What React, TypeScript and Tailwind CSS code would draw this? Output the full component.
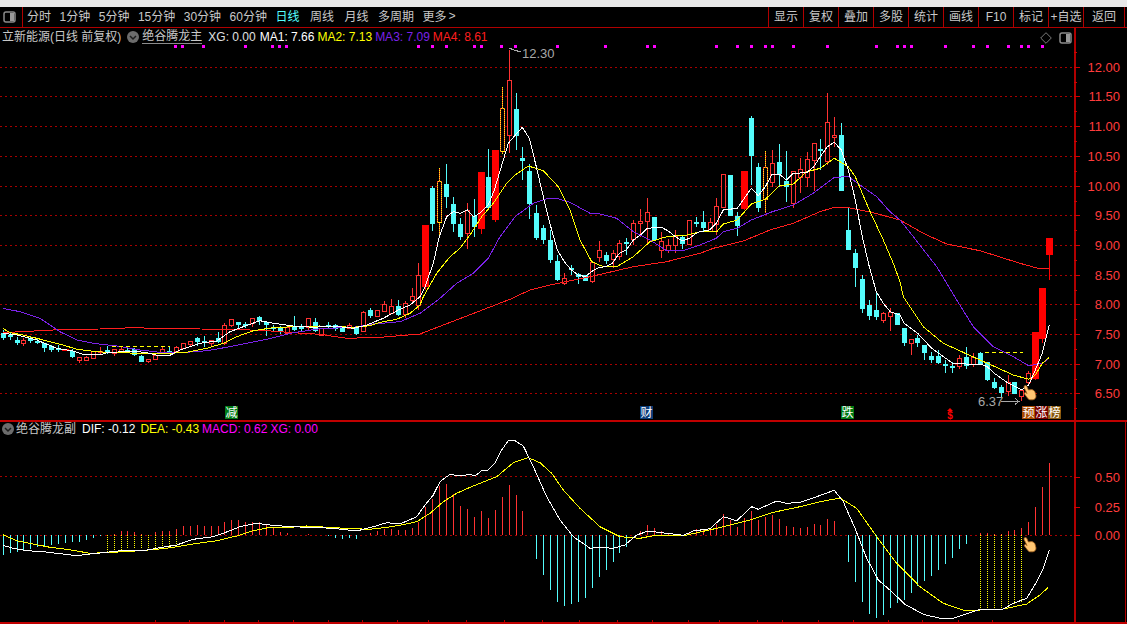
import React from 'react';

type Candle = [number, number, number, number, string];

// hi, body top, body bottom, lo, kind (r hollow red, R solid red, c cyan, y dotted yellow)
const candles: Candle[] = [
  [330,333,338,340,'c'],[333,335,337,340,'c'],[337,340,343,345,'c'],[338,340,343,346,'r'],[336,338,341,343,'c'],
  [338,341,342,344,'c'],[343,343,348,352,'c'],[345,346,350,352,'c'],[345,348,349,352,'c'],[349,349,351,351,'R'],
  [349,351,357,358,'c'],[357,357,360,363,'r'],[356,357,360,360,'r'],[351,351,358,358,'r'],[347,351,352,355,'r'],
  [346,350,353,354,'c'],[349,349,353,356,'r'],[347,349,351,352,'r'],[348,350,351,353,'c'],[348,349,355,356,'c'],
  [355,356,362,362,'c'],[359,359,361,363,'r'],[353,355,359,359,'r'],[347,349,353,354,'r'],[347,351,352,353,'c'],
  [346,347,351,353,'r'],[343,343,348,348,'r'],[341,341,344,346,'r'],[337,338,342,346,'c'],[336,341,343,347,'c'],
  [340,340,343,346,'r'],[332,338,342,343,'c'],[323,325,343,345,'r'],[319,319,325,327,'r'],[322,322,325,329,'c'],
  [322,324,326,328,'c'],[318,318,323,327,'r'],[316,317,321,325,'c'],[321,322,325,336,'c'],[325,327,329,331,'c'],
  [326,328,331,334,'c'],[326,327,333,335,'r'],[316,327,330,331,'c'],[324,327,329,332,'c'],[318,318,327,330,'r'],
  [318,322,331,332,'c'],[328,328,335,335,'r'],[322,325,327,329,'c'],[324,325,329,331,'c'],[328,328,332,332,'c'],
  [323,325,328,329,'r'],[326,328,334,335,'c'],[311,312,331,331,'r'],[308,310,316,318,'c'],[310,310,316,316,'r'],
  [301,304,311,312,'r'],[299,306,313,313,'r'],[300,306,315,316,'c'],[301,303,314,318,'r'],[288,296,300,303,'r'],
  [263,275,305,310,'r'],[225,225,287,290,'R'],[186,188,224,231,'c'],[168,181,222,238,'y'],[164,184,197,208,'c'],
  [197,204,224,232,'c'],[218,224,237,240,'c'],[203,210,233,249,'r'],[199,216,227,237,'c'],[172,172,229,234,'R'],
  [149,177,208,208,'c'],[150,150,220,222,'R'],[87,108,151,154,'y'],[50,80,135,153,'r'],[93,109,136,150,'c'],
  [147,158,161,180,'c'],[164,171,204,219,'c'],[205,213,238,240,'c'],[225,228,240,244,'c'],[230,240,260,263,'c'],
  [255,261,280,281,'c'],[273,278,283,285,'r'],[265,268,270,275,'c'],[273,274,277,284,'c'],[275,275,281,281,'c'],
  [262,262,281,283,'r'],[241,250,257,262,'r'],[252,255,261,264,'c'],[250,253,259,268,'r'],[240,243,256,260,'r'],
  [238,242,244,255,'c'],[220,223,239,245,'r'],[209,221,223,237,'r'],[198,212,221,244,'r'],[217,217,240,240,'c'],
  [232,241,250,258,'r'],[239,245,250,253,'r'],[230,236,245,253,'r'],[235,237,244,249,'c'],[220,220,244,244,'r'],
  [217,222,223,227,'c'],[211,222,228,232,'c'],[218,222,231,231,'r'],[198,206,224,235,'r'],[174,174,207,207,'r'],
  [175,175,216,216,'c'],[212,216,226,236,'c'],[171,171,209,210,'R'],[116,118,156,185,'c'],[163,167,208,212,'c'],
  [151,167,199,213,'y'],[150,163,182,187,'r'],[144,162,174,187,'c'],[151,181,187,202,'c'],[171,171,203,208,'r'],
  [158,169,177,193,'r'],[152,159,177,187,'r'],[143,143,160,191,'r'],[139,149,151,170,'c'],[93,122,161,165,'r'],
  [117,135,137,147,'r'],[123,135,191,191,'c'],[208,230,250,250,'c'],[249,253,268,287,'c'],[275,279,309,313,'c'],
  [300,305,316,320,'c'],[293,310,317,320,'c'],[312,313,320,323,'r'],[308,312,316,331,'r'],[313,313,325,325,'c'],
  [328,328,343,346,'c'],[339,339,343,355,'r'],[335,338,343,347,'c'],[345,345,353,360,'c'],[352,356,360,363,'c'],
  [350,356,363,364,'c'],[360,364,365,373,'c'],[362,366,367,373,'c'],[355,358,366,369,'r'],[347,357,366,369,'c'],
  [353,357,364,367,'r'],[352,353,364,365,'c'],[362,362,380,381,'c'],[378,382,388,389,'c'],[385,387,393,398,'c'],
  [375,382,391,396,'r'],[382,382,394,394,'c'],[390,390,396,401,'r'],[371,373,382,384,'r'],[332,332,379,380,'R'],
  [288,288,339,343,'R'],[238,238,255,280,'R'],
];

// MACD bar height in px from the zero line, + up / - down
const macd = [
  -20,-18,-17,-15,-14,-12,-11,-10,-9,-8,-7,-7,-5,-3,-1,0,1,4,4,3,1,0,3,4,4,6,9,9,10,9,9,9,13,15,15,13,13,13,10,8,3,2,0,0,1,0,0,-1,-3,-4,
  -3,-4,0,2,4,6,6,5,5,7,13,28,36,49,51,41,29,26,18,24,17,25,38,50,40,24,0,-24,-40,-55,-67,-71,-69,-67,-63,-53,-42,-35,-27,-18,-12,0,4,10,7,4,1,0,0,3,
  6,5,6,11,21,15,8,17,24,15,18,20,16,9,8,7,8,11,10,16,14,0,-27,-47,-67,-79,-83,-80,-73,-68,-65,-58,-51,-46,-41,-35,-29,-23,-14,-9,0,2,2,1,1,4,5,7,13,28,48,72,
];

const dotted: [number, number][] = [
  [15,552],[16,551],[17,550],[18,549],[19,549],[20,549],[21,550],[22,549],[23,548],[24,546],[25,545],
  [141,608],[142,608],[143,608],[144,608],[145,605],[146,604],[147,602],
];

const magenta = [174,181,202,244,271,278,285,417,431,445,473,480,500,514,556,604,646,653,715,736,750,764,771,792,826,875,896,903,910,944,972,986,1007,1020,1027,1041];

const cx = (i: number) => Math.round(2.7 + 6.93 * i);

// scale a flat list of 3x crop coordinates back to page pixels
const seg = (ox: number, oy: number, pts: number[]) => {
  const out: [number, number][] = [];
  for (let i = 0; i < pts.length; i += 2) out.push([ox + pts[i] / 3, oy + pts[i + 1] / 3]);
  return out;
};

const join = (...segs: [number, number][][]) => {
  const out: [number, number][] = [];
  segs.forEach((s) => s.forEach((p) => {
    if (!out.length || p[0] > out[out.length - 1][0]) out.push(p);
  }));
  return out.map((p) => p[0].toFixed(1) + ',' + p[1].toFixed(1)).join(' ');
};

const ma1 = join(
  seg(0,290,[8,130,50,135,110,150,170,175,215,182,250,193,300,195,320,188,400,183,440,188,480,198,510,196,540,180,600,160,650,153,690,125,730,110,780,92,820,100,880,108,940,112,1000,108,1060,115,1100,105,1150,85,1195,60,1230,45,1260,20]),
  seg(400,40,[55,780,75,740,100,670,118,590,140,530,160,515,180,520,202,510,222,530,243,517,265,495,283,450,304,380,325,310,346,285,367,262,388,295,409,380,430,470,451,555,472,630,493,665,514,690,535,705,556,710,574,695,595,683,616,680,637,670,658,640,679,630,700,600,721,585,742,565,763,563,784,562,805,573,826,590,847,603,868,595,889,580,900,575]),
  seg(680,80,[0,480,20,475,49,460,88,450,109,430,130,390,172,385,193,355,214,325,235,347,256,320,277,282,298,282,319,300,340,280,380,278,401,260,421,230,442,200,463,187,484,210,505,270,526,360,547,470,568,560,589,635,610,670,631,695,660,705]),
  seg(880,220,[0,240,31,285,73,310,113,340,155,385,197,415,218,430,259,432,301,432,322,440,343,460,385,490,425,510,446,495,466,450,487,400,508,316]),
);

const ma2 = join(
  seg(0,290,[8,115,30,128,70,135,110,145,150,155,190,165,230,178,290,185,340,188,440,190,510,190,560,187,620,175,670,160,710,140,760,122,820,113,880,110,960,108,1060,112,1110,107,1140,97,1190,88,1230,70,1260,45]),
  seg(400,40,[70,770,110,700,150,650,180,625,210,585,245,530,280,490,320,430,345,405,385,378,430,392,475,440,510,510,540,600,575,665,610,680,650,680,700,650,750,605,800,590,860,585,900,575]),
  seg(680,80,[0,465,30,458,110,455,130,432,172,420,214,372,256,358,298,318,340,312,380,275,421,265,463,235,505,260,526,290,568,390,610,480,640,550,660,605]),
  seg(880,220,[0,30,30,130,70,230,130,320,190,370,300,420,345,440,400,465,446,478,466,465,487,430,508,412]),
);

const ma3 = join(
  seg(0,290,[8,55,60,65,120,85,180,125,230,150,280,160,350,168,420,180,480,187,560,187,620,182,680,172,740,160,800,148,880,128,960,116,1060,112,1120,102,1200,95,1260,70]),
  seg(400,40,[120,775,170,730,220,700,265,655,300,590,345,530,400,490,440,476,470,475,510,487,570,520,600,522,650,535,700,575,750,600,800,632,850,632,900,615]),
  seg(680,80,[0,515,30,505,109,475,130,455,172,445,214,420,277,395,340,375,400,340,463,292,505,290,540,315,590,350,630,395,660,420]),
  seg(880,220,[60,0,100,50,170,140,230,240,280,320,340,380,400,410,446,437,487,430,508,415]),
);

const ma4 = join(
  seg(0,290,[8,128,60,125,120,122,200,118,300,117,400,113,500,116,600,117,700,118,800,122,880,128,960,133,1040,145,1140,142,1260,132]),
  seg(400,40,[330,778,390,750,450,735,580,708,700,680,800,665,900,640]),
  seg(680,80,[0,535,100,505,190,483,270,450,340,430,420,395,463,382,505,383,580,398,660,420]),
  seg(880,220,[60,0,130,40,200,72,300,92,420,130,470,144,508,146]),
);

const dif = join(
  seg(0,420,[8,376,40,385,80,392,130,395,170,400,230,407,270,402,320,397,380,390,430,392,480,383,530,375,580,358,640,350,670,340,720,320,770,310,810,315,870,320,930,322,1000,325,1070,333,1120,320,1160,308,1200,312]),
  seg(400,430,[0,277,50,260,75,225,100,195,120,155,150,133,180,138,210,133,225,138,245,122,262,123,285,100,305,60,325,32,345,32,370,48,400,110,440,200,480,270,520,320,570,355,600,352,640,355,675,345,710,315,745,303,800,310,850,316,880,303,930,296,970,260,1010,272,1055,230,1075,238,1130,213,1160,220,1200,217]),
  seg(800,430,[0,217,50,200,103,181,130,215,165,295,200,385,235,450,275,485,315,523,370,553,420,565,460,565,520,545,541,537,610,537,640,520,680,505,710,455,730,415,748,360]),
);

const dea = join(
  seg(0,420,[8,344,50,362,100,372,150,382,200,388,270,400,340,397,420,392,500,385,580,372,650,362,710,348,760,332,810,322,870,322,920,318,1000,323,1060,326,1110,328,1160,322,1200,316]),
  seg(400,430,[0,284,50,275,90,250,130,215,170,190,210,172,290,140,340,98,385,83,420,98,455,130,490,180,540,235,600,290,660,320,720,325,770,315,860,315,950,295,1050,270,1120,247,1200,230]),
  seg(800,430,[0,229,60,215,120,204,170,235,230,320,290,400,360,470,430,520,490,540,540,540,610,537,680,522,720,495,745,472]),
);

const priceLabels = ['12.00','11.50','11.00','10.50','10.00','9.50','9.00','8.50','8.00','7.50','7.00','6.50'];
const priceY = (i: number) => Math.round(66.7 + 29.7 * i);

const toolsLeft = [
  { t: '分时', c: '' },
  { t: '1分钟', c: '' },
  { t: '5分钟', c: '' },
  { t: '15分钟', c: '' },
  { t: '30分钟', c: '' },
  { t: '60分钟', c: '' },
  { t: '日线', c: 'text-[#55ffff]' },
  { t: '周线', c: 'ml-[2px]' },
  { t: '月线', c: 'ml-[2px]' },
  { t: '多周期', c: 'ml-[1px]' },
];
const toolsRight = ['显示','复权','叠加','多股','统计','画线','F10','标记','+自选'];
const axisTicks = [155,189,224,258,293,328,362,397,428,466,504,542,579,617,652,688,719,757,782,818,853,888,922,958,992];

const PanelIcon = () => (
  <svg width="13" height="12" viewBox="0 0 13 12">
    <rect x="1" y="1" width="11" height="10" rx="2" fill="none" stroke="#8a8a8a" strokeWidth="1.5" />
    <rect x="7" y="2" width="4" height="8" fill="#9a9a9a" />
  </svg>
);

const ChevronDot = () => (
  <svg width="12" height="12" viewBox="0 0 12 12">
    <circle cx="6" cy="6" r="6" fill="#6c6c6c" />
    <path d="M3 5l3 3 3-3" fill="none" stroke="#1c1c1c" strokeWidth="1.5" />
  </svg>
);

const Hand = ({ className }: { className: string }) => (
  <svg className={className} width="14" height="16" viewBox="0 0 14 16">
    <path
      d="M1.6.8c1-.6 2 0 2.4 1l1.4 3.2 3-.4c1.8.2 3.6 1.4 3.8 3.2l.8 3.2c0 2.200-1.500 3.800-3.500 3.800H7.500c-1.300 0-2-.6-2.800-1.600L1.500 9c-.6-1 .6-2 1.600-1.200l1 .8L1.200 2.800c-.3-.9-.1-1.600.4-2z"
      fill="#ffc672"
      stroke="#a8641e"
      strokeWidth="0.8"
    />
  </svg>
);

const Tag = ({ text, className }: { text: string; className: string }) => (
  <span className={'w-[13px] h-[13px] flex items-center justify-center text-white text-xs leading-none ' + className}>{text}</span>
);

const CandleMark = ({ c, i }: { c: Candle; i: number }) => {
  const x = cx(i);
  const [hi, top, bot, lo, kind] = c;
  if (kind === 'c') {
    return (
      <g fill="#54fcfc">
        <rect x={x} y={hi} width="1" height={lo - hi} />
        <rect x={x - 2} y={top} width="5" height={Math.max(bot - top, 2)} />
      </g>
    );
  }
  if (kind === 'R') {
    return (
      <g fill="#ff0000">
        <rect x={x} y={hi} width="1" height={lo - hi} />
        <rect x={x - 3} y={top} width="7" height={bot - top} />
      </g>
    );
  }
  const stroke = '#ff3232';
  return (
    <g>
      <rect x={x} y={hi} width="1" height={top - hi} fill={stroke} />
      <rect x={x} y={bot} width="1" height={lo - bot} fill={stroke} />
      <rect x={x - 1.5} y={top + 0.5} width="4" height={bot - top} fill="#000" stroke={stroke} />
      {kind === 'y' && (
        <g fill="none" stroke="#ffff00" strokeDasharray="1 1">
          <rect x={x - 1.5} y={top + 0.5} width="4" height={bot - top} />
          <path d={`M${x + 0.5} ${hi}V${top}M${x + 0.5} ${bot}V${lo}`} />
        </g>
      )}
    </g>
  );
};

export default function App() {
  return (
    <div className="w-[1127px] h-[624px] bg-black flex flex-col overflow-hidden font-['Liberation_Sans','Noto_Sans_CJK_SC',sans-serif] text-xs text-[#c8c8c8]">
      <div className="h-[7px] bg-[#e8e8e8]" />

      {/* toolbar */}
      <div className="h-[21px] flex items-center border-b border-[#b00000]">
        <div className="w-[23px] h-full flex items-center pl-[3px] border-r border-[#b00000]">
          <PanelIcon />
        </div>
        <div className="flex items-center gap-[8.5px] pl-1">
          {toolsLeft.map((x) => (
            <span key={x.t} className={x.c}>{x.t}</span>
          ))}
          <span className="flex items-center">更多<span className="ml-[2px] font-mono">&gt;</span></span>
        </div>
        <div className="ml-auto flex h-full items-stretch mr-[2px]">
          {toolsRight.map((t) => (
            <span key={t} className="w-[35px] flex items-center justify-center border-l border-[#b00000] whitespace-nowrap">{t}</span>
          ))}
          <span className="w-[42px] flex items-center justify-center border-x border-[#b00000]">返回</span>
        </div>
      </div>

      {/* price panel */}
      <div className="flex h-[392px]">
        <div className="relative w-[1074px] h-full">
          <svg width="1074" height="392" viewBox="0 28 1074 392" className="block" shapeRendering="crispEdges">
            {priceLabels.map((p, i) => (
              <line key={p} x1="0" x2="1074" y1={priceY(i) + 0.5} y2={priceY(i) + 0.5} stroke="#a80000" strokeDasharray="2 3" />
            ))}
            {magenta.map((x) => (
              <rect key={x} x={x} y="45" width="3" height="3" fill="#ff00ff" />
            ))}
            {candles.map((c, i) => (
              <CandleMark key={i} c={c} i={i} />
            ))}
            <polyline points={ma4} fill="none" stroke="#ff1e1e" />
            <polyline points={ma3} fill="none" stroke="#7b22e8" />
            <polyline points={ma2} fill="none" stroke="#ffff00" />
            <polyline points={ma1} fill="none" stroke="#ffffff" />
            <path d="M112 346.500H170M985 352.500H1023" stroke="#ffff00" strokeDasharray="4 3" />
            <path d="M509 48L514 50L521 52" fill="none" stroke="#a8a8a8" />
            <path d="M1001 401.500H1019M1015 398.500L1019 401.500L1015 404.500" fill="none" stroke="#a8a8a8" />
          </svg>

          {/* readouts over the chart */}
          <div className="absolute left-[2px] top-0 h-[17px] flex items-center whitespace-nowrap">
            <span>立新能源(日线 前复权)</span>
            <span className="ml-[6px]"><ChevronDot /></span>
            <span className="ml-[3px] border-b border-[#8c8c8c] leading-[14px]">绝谷腾龙主</span>
            <span className="ml-[6px] text-[#e0e0e0]">XG: 0.00</span>
            <span className="ml-[4px] text-white">MA1: 7.66</span>
            <span className="ml-[3px] text-[#ffff00]">MA2: 7.13</span>
            <span className="ml-[3px] text-[#7b22e8]">MA3: 7.09</span>
            <span className="ml-[3px] text-[#ff1e1e]">MA4: 8.61</span>
          </div>
          <div className="absolute right-[2px] top-[4px] flex items-center gap-[7px]">
            <svg width="12" height="12" viewBox="0 0 12 12">
              <path d="M6 .7L11.300 6 6 11.300.7 6z" fill="none" stroke="#7a7a7a" />
            </svg>
            <PanelIcon />
          </div>
          <span className="absolute left-[522px] top-[19px] text-[13px] leading-[14px] text-[#a8a8a8]">12.30</span>
          <span className="absolute left-[978px] top-[367px] text-[13px] leading-[14px] text-[#a8a8a8]">6.37</span>
          <Tag text="减" className="absolute left-[225px] top-[378px] bg-[#007a14]" />
          <Tag text="财" className="absolute left-[640px] top-[378px] bg-[#0c3c78]" />
          <Tag text="跌" className="absolute left-[841px] top-[378px] bg-[#007a14]" />
          <span className="absolute left-[947px] top-[380px] flex flex-col items-center text-[#ff0000] font-bold leading-none">
            <span className="w-0 h-0 border-x-[3px] border-x-transparent border-b-[3px] border-b-[#ff0000]" />
            <span className="text-[10px] leading-[9px]">$</span>
          </span>
          <div className="absolute left-[1022px] top-[378px] flex">
            <Tag text="预" className="bg-[#a84a00]" />
            <Tag text="涨" className="bg-[#780000]" />
            <Tag text="榜" className="bg-[#8a5a10]" />
          </div>
          <Hand className="absolute left-[1023px] top-[357px]" />
        </div>

        <svg width="53" height="392" viewBox="1074 28 53 392" className="block">
          <rect x="1074" y="28" width="2" height="392" fill="#b00000" />
          {priceLabels.map((p, i) => (
            <g key={p}>
              <rect x="1074" y={priceY(i)} width="6" height="1" fill="#d00000" />
              <rect x="1074" y={priceY(i) + 15} width="3" height="1" fill="#d00000" />
              <text x="1120" y={priceY(i) + 5} textAnchor="end" fontSize="13" fill="#ff3c3c">{p}</text>
            </g>
          ))}
          <rect x="1074" y="52" width="3" height="1" fill="#d00000" />
        </svg>
      </div>

      {/* MACD panel */}
      <div className="flex h-[204px] border-y-2 border-[#c00000]">
        <div className="relative w-[1074px] h-[200px]">
          <svg width="1074" height="200" viewBox="0 422 1074 200" className="block" shapeRendering="crispEdges">
            <line x1="0" x2="1074" y1="476.500" y2="476.500" stroke="#a80000" strokeDasharray="2 3" />
            <line x1="0" x2="1074" y1="535.500" y2="535.500" stroke="#a80000" strokeDasharray="2 3" />
            {dotted.map(([i, y]) => (
              <line key={i} x1={cx(i) + 0.5} x2={cx(i) + 0.5} y1="535" y2={y} stroke="#ffff00" strokeDasharray="1 1" />
            ))}
            {macd.map((v, i) =>
              v === 0 ? null : (
                <rect
                  key={i}
                  x={cx(i)}
                  y={v > 0 ? 535 - v : 535}
                  width="1"
                  height={Math.abs(v)}
                  fill={v > 0 ? '#ff3232' : '#54fcfc'}
                />
              ),
            )}
            <polyline points={dea} fill="none" stroke="#ffff00" />
            <polyline points={dif} fill="none" stroke="#ffffff" />
            {axisTicks.map((x) => (
              <rect key={x} x={x} y="620" width="1" height="2" fill="#b00000" />
            ))}
          </svg>

          <div className="absolute left-[2px] top-0 h-[14px] flex items-center whitespace-nowrap">
            <ChevronDot />
            <span className="ml-[2px]">绝谷腾龙副</span>
            <span className="ml-[6px] text-white">DIF: -0.12</span>
            <span className="ml-[5px] text-[#ffff00]">DEA: -0.43</span>
            <span className="ml-[3px] text-[#ff00ff]">MACD: 0.62</span>
            <span className="ml-[3px] text-[#ff00ff]">XG: 0.00</span>
          </div>
          <Hand className="absolute left-[1023px] top-[115px]" />
        </div>

        <svg width="53" height="200" viewBox="1074 422 53 200" className="block">
          <rect x="1074" y="422" width="2" height="200" fill="#b00000" />
          <rect x="1125" y="422" width="1" height="200" fill="#b00000" />
          {[['0.50', 477], ['0.25', 507], ['0.00', 535]].map(([t, y]) => (
            <g key={t as string}>
              <rect x="1074" y={y as number} width="6" height="1" fill="#d00000" />
              <text x="1120" y={(y as number) + 5} textAnchor="end" fontSize="13" fill="#ff3c3c">{t}</text>
            </g>
          ))}
        </svg>
      </div>
    </div>
  );
}
